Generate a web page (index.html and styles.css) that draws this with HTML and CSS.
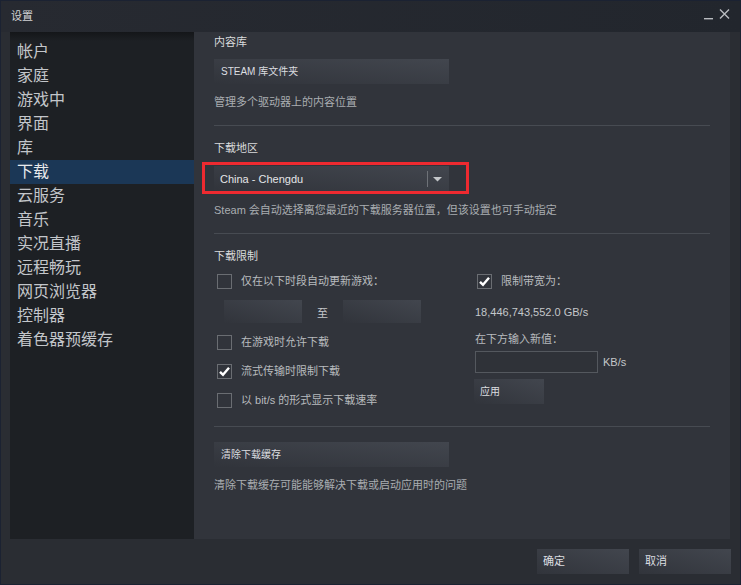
FILE: index.html
```html
<!DOCTYPE html>
<html lang="zh-CN">
<head>
<meta charset="utf-8">
<title>设置</title>
<link rel="stylesheet" href="styles.css">
</head>
<body>
<div class="window">
  <div class="titlebar">
    <span class="title">设置</span>
    <div class="controls">
      <svg class="ctl-min" width="9" height="3" viewBox="0 0 9 3"><rect x="0" y="1" width="9" height="1.4" fill="#b9bcc0"/></svg>
      <svg class="ctl-close" width="11" height="10" viewBox="0 0 11 10"><path d="M1 0.5 L10 9.5 M10 0.5 L1 9.5" stroke="#b9bcc0" stroke-width="1.4" fill="none"/></svg>
    </div>
  </div>
  <div class="main">
    <nav class="sidebar">
      <div class="nav-item">帐户</div>
      <div class="nav-item">家庭</div>
      <div class="nav-item">游戏中</div>
      <div class="nav-item">界面</div>
      <div class="nav-item">库</div>
      <div class="nav-item active">下载</div>
      <div class="nav-item">云服务</div>
      <div class="nav-item">音乐</div>
      <div class="nav-item">实况直播</div>
      <div class="nav-item">远程畅玩</div>
      <div class="nav-item">网页浏览器</div>
      <div class="nav-item">控制器</div>
      <div class="nav-item">着色器预缓存</div>
    </nav>
    <section class="content">
      <div class="heading first">内容库</div>
      <div class="btn wide gap10">STEAM 库文件夹</div>
      <div class="desc gap11">管理多个驱动器上的内容位置</div>
      <div class="sep gap16"></div>

      <div class="heading gap15">下载地区</div>
      <div class="dropdown-wrap gap11">
        <div class="dropdown">
          <span class="dd-text">China - Chengdu</span>
          <span class="dd-divider"></span>
          <svg class="dd-arrow" width="9" height="5" viewBox="0 0 9 5"><path d="M0 0 H9 L4.5 4.5 Z" fill="#c4c7ca"/></svg>
        </div>
        <div class="highlight"></div>
      </div>
      <div class="desc gap12">Steam 会自动选择离您最近的下载服务器位置，但该设置也可手动指定</div>
      <div class="sep gap16"></div>

      <div class="heading gap15">下载限制</div>
      <div class="limits">
        <div class="col-left">
          <div class="check-row">
            <span class="checkbox"></span>
            <span class="check-label">仅在以下时段自动更新游戏：</span>
          </div>
          <div class="times">
            <span class="time-box"></span>
            <span class="to">至</span>
            <span class="time-box"></span>
          </div>
          <div class="check-row gap12">
            <span class="checkbox"></span>
            <span class="check-label">在游戏时允许下载</span>
          </div>
          <div class="check-row gap14">
            <span class="checkbox checked"><svg width="13" height="13" viewBox="0 0 13 13"><path d="M2 6.8 L5 9.8 L11 2.8" stroke="#ffffff" stroke-width="2.4" fill="none"/></svg></span>
            <span class="check-label">流式传输时限制下载</span>
          </div>
          <div class="check-row gap14">
            <span class="checkbox"></span>
            <span class="check-label">以 bit/s 的形式显示下载速率</span>
          </div>
        </div>
        <div class="col-right">
          <div class="check-row">
            <span class="checkbox checked"><svg width="13" height="13" viewBox="0 0 13 13"><path d="M2 6.8 L5 9.8 L11 2.8" stroke="#ffffff" stroke-width="2.4" fill="none"/></svg></span>
            <span class="check-label">限制带宽为：</span>
          </div>
          <div class="rate">18,446,743,552.0 GB/s</div>
          <div class="rate-label">在下方输入新值：</div>
          <div class="input-row">
            <span class="text-input"></span>
            <span class="unit">KB/s</span>
          </div>
          <div class="btn apply">应用</div>
        </div>
      </div>
      <div class="sep gap18"></div>
      <div class="btn wide gap15">清除下载缓存</div>
      <div class="desc gap11">清除下载缓存可能能够解决下载或启动应用时的问题</div>
    </section>
  </div>
  <div class="footer">
    <div class="btn footer-btn">确定</div>
    <div class="btn footer-btn">取消</div>
  </div>
</div>
</body>
</html>
```

FILE: styles.css
```css
* { box-sizing: border-box; }
html, body {
  margin: 0;
  padding: 0;
  background: #2a2d33;
}
body {
  font-family: "Liberation Sans", "Noto Sans CJK SC", sans-serif;
  font-size: 11px;
  color: #c6c9cc;
}
.window {
  width: 741px;
  height: 585px;
  border: 1px solid #1b2232;
  background: #2a2d33;
  display: flex;
  flex-direction: column;
}
.titlebar {
  height: 31px;
  flex: none;
  display: flex;
  align-items: center;
  justify-content: space-between;
  padding: 0 10px 0 10px;
  background: linear-gradient(to right, #272a31, #22262d);
}
.title {
  font-size: 11px;
  line-height: 14px;
  color: #d2d4d6;
  margin-top: -1px;
}
.controls {
  display: flex;
  align-items: flex-start;
  gap: 6px;
  margin-top: -4px;
}
.ctl-min { margin-top: 8px; }
.ctl-close { margin-top: 0; }

.main {
  flex: none;
  height: 507px;
  display: flex;
  padding: 0 10px 0 9px;
}
.sidebar {
  width: 184px;
  flex: none;
  padding-top: 8px;
  background: linear-gradient(to bottom, #141619 0, #1d2024 9px, #1d2024 100%);
}
.nav-item {
  height: 24px;
  line-height: 24px;
  padding-left: 7px;
  font-size: 16px;
  color: #c3c6ca;
}
.nav-item.active {
  background: #1b3756;
  color: #e8eaec;
}
.content {
  flex: 1;
  padding: 3px 20px 0 20px;
  background: #31343b;
}
.heading {
  line-height: 14px;
  color: #d9dbdc;
}
.desc {
  line-height: 14px;
  color: #a9adb1;
}
.gap10 { margin-top: 10px; }
.gap11 { margin-top: 11px; }
.gap12 { margin-top: 12px; }
.gap14 { margin-top: 14px; }
.gap15 { margin-top: 15px; }
.gap16 { margin-top: 16px; }
.gap18 { margin-top: 18px; }
.sep {
  height: 1px;
  background: #474b52;
}
.btn {
  height: 25px;
  line-height: 25px;
  padding-left: 7px;
  font-size: 10px;
  color: #dcdee0;
  background: linear-gradient(to top right, #31343b, #42464e);
}
.wide { width: 235px; }

.dropdown-wrap {
  position: relative;
  width: 235px;
  height: 25px;
}
.dropdown {
  height: 25px;
  display: flex;
  align-items: center;
  padding-left: 6px;
  background: linear-gradient(to top right, #31343b, #42464e);
}
.dd-text {
  flex: 1;
  font-size: 11px;
  color: #e4e6e8;
}
.dd-divider {
  width: 1px;
  height: 16px;
  background: #6e7278;
}
.dd-arrow {
  margin: 1px 7px 0 5px;
}
.highlight {
  position: absolute;
  left: -12px;
  top: -4px;
  width: 267px;
  height: 32px;
  border: 3px solid #ee2a30;
}

.limits {
  margin-top: 11px;
  display: grid;
  grid-template-columns: 260px 1fr;
}
.check-row {
  display: flex;
  align-items: center;
  height: 15px;
  padding-left: 3px;
}
.checkbox {
  width: 15px;
  height: 15px;
  flex: none;
  border: 1px solid #6a6d72;
  display: flex;
  align-items: center;
  justify-content: center;
}
.checkbox svg { display: block; }
.check-label {
  margin-left: 9px;
  line-height: 15px;
  color: #b8bbbe;
}
.times {
  margin-top: 11px;
  display: flex;
  align-items: center;
  padding-left: 10px;
  height: 23px;
}
.time-box {
  width: 78px;
  height: 23px;
  background: linear-gradient(to top right, #31343b, #42464e);
}
.to {
  width: 41px;
  text-align: center;
  color: #c4c7ca;
}
.rate {
  margin-top: 16px;
  padding-left: 1px;
  line-height: 14px;
  color: #c4c7ca;
}
.rate-label {
  margin-top: 13px;
  padding-left: 1px;
  line-height: 14px;
  color: #b8bbbe;
}
.input-row {
  margin-top: 5px;
  display: flex;
  align-items: center;
  padding-left: 1px;
}
.text-input {
  width: 123px;
  height: 22px;
  border: 1px solid #54585e;
  background: #2f3238;
}
.unit {
  margin-left: 5px;
  color: #c4c7ca;
}
.apply {
  margin-top: 6px;
  width: 70px;
  padding-left: 6px;
}

.footer {
  flex: 1;
  display: flex;
  justify-content: flex-end;
  gap: 10px;
  padding: 10px 9px 0 0;
}
.footer-btn {
  width: 92px;
  font-size: 11px;
  padding-left: 6px;
}
```
